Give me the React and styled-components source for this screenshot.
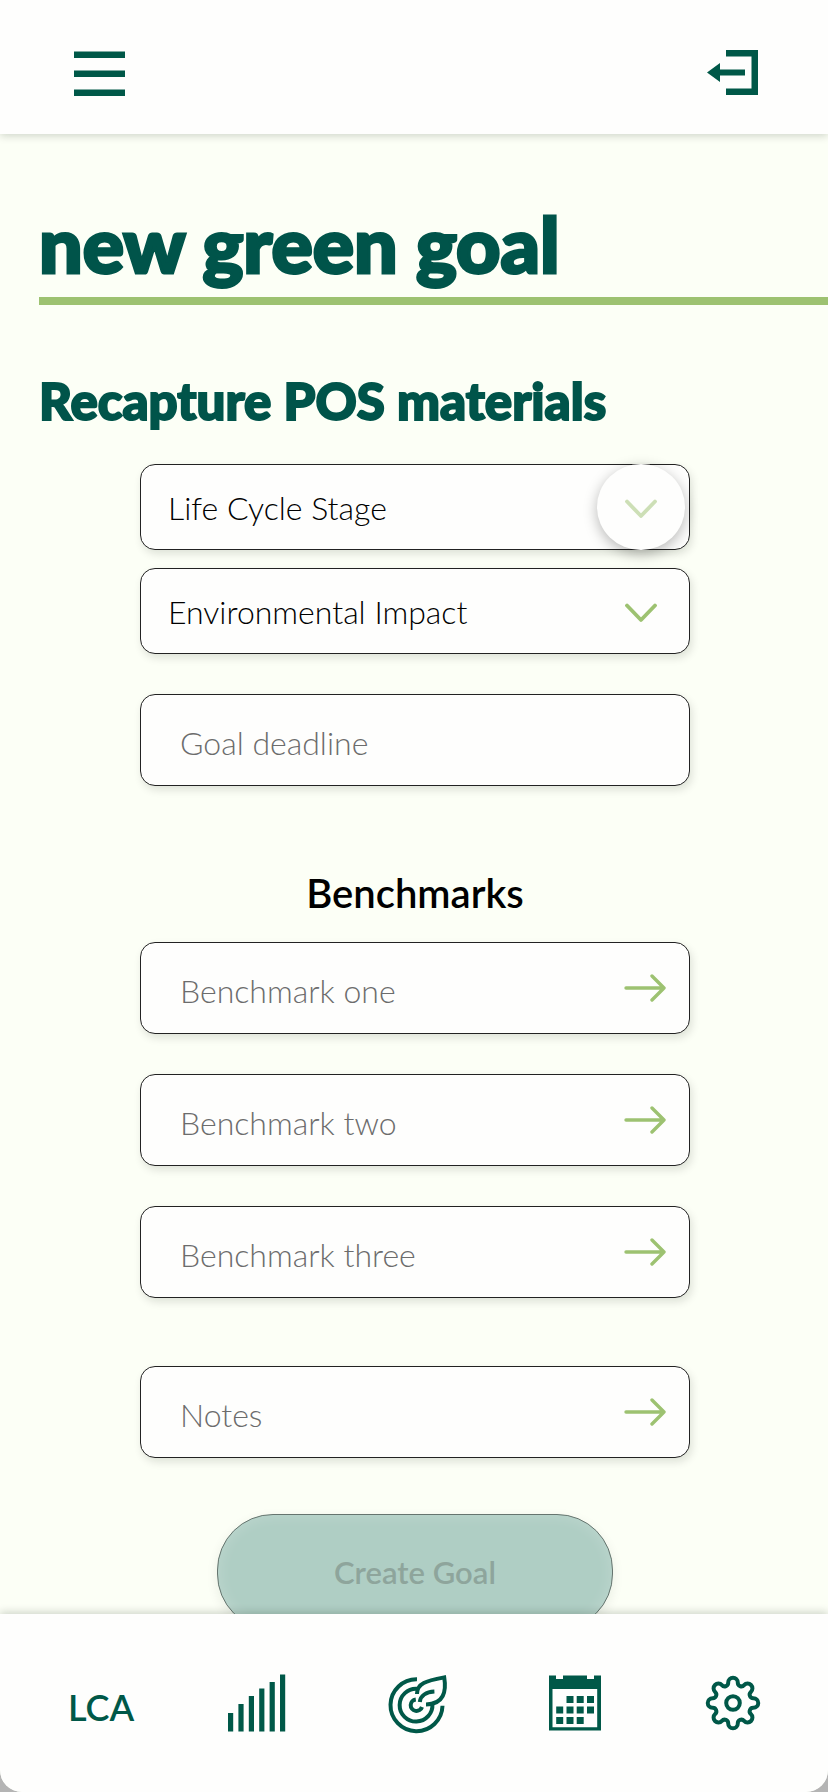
import React from "react";
import styled, { createGlobalStyle, css } from "styled-components";

const colors = {
  ink: "#005848",
  title: "#00544a",
  leaf: "#9dc271",
  page: "#fcfff6",
  surface: "#fefefd",
};

const GlobalStyle = createGlobalStyle`
  *, *::before, *::after { box-sizing: border-box; }
  body {
    margin: 0;
    background: #b4b4b4;
    font-family: Lato, "Liberation Sans", sans-serif;
  }
  h1, h2, h3 { margin: 0; }
`;

const Screen = styled.div`
  height: 100vh;
  display: flex;
  flex-direction: column;
  overflow: hidden;
  background: ${colors.page};
  border-radius: 0 0 22px 22px;
`;

const Header = styled.header`
  flex: none;
  z-index: 1;
  display: flex;
  align-items: center;
  justify-content: space-between;
  height: 134px;
  padding: 12px 70px 0 74px;
  background: ${colors.surface};
  box-shadow: 0 2px 8px rgba(0, 20, 0, 0.18);
`;

const IconButton = styled.button`
  display: flex;
  padding: 0;
  border: 0;
  background: none;
  color: ${colors.ink};
  cursor: pointer;
`;

const Content = styled.main`
  flex: 1;
  min-height: 0;
  overflow-y: auto;
  scrollbar-width: none;
  padding: 69px 0 40px;
`;

const PageTitle = styled.h1`
  margin-left: 39px;
  padding-bottom: 14px;
  border-bottom: 8px solid ${colors.leaf};
  color: ${colors.title};
  font-size: 77px;
  font-weight: 900;
  line-height: 80px;
  -webkit-text-stroke: 3px ${colors.title};
`;

const GoalName = styled.h2`
  margin: 66px 39px 33px;
  color: ${colors.title};
  font-size: 51px;
  font-weight: 900;
  line-height: 60px;
  -webkit-text-stroke: 2px ${colors.title};
`;

const GoalForm = styled.form`
  display: flex;
  flex-direction: column;
  margin: 0 138px 0 140px;
`;

const FieldGroup = styled.div`
  display: flex;
  flex-direction: column;
  gap: ${({ $gap }) => $gap}px;
  margin-bottom: ${({ $after }) => $after}px;
`;

const SectionTitle = styled.h3`
  margin-bottom: 24px;
  font-size: 40px;
  font-weight: 600;
  line-height: 50px;
  text-align: center;
`;

const Field = styled.div`
  position: relative;
`;

const controlStyles = css`
  display: block;
  width: 100%;
  margin: 0;
  border: 1px solid #222;
  border-radius: 15px;
  outline: 0;
  background: ${colors.surface};
  box-shadow: 2px 4px 8px rgba(0, 20, 10, 0.12);
  font-family: inherit;
  font-size: 32px;
  font-weight: 300;
`;

const Select = styled.select`
  ${controlStyles}
  appearance: none;
  height: 86px;
  padding: 0 100px 0 27px;
  color: #000;
`;

const TextInput = styled.input`
  ${controlStyles}
  height: 92px;
  padding: 4px 80px 0 39px;
  color: #000;

  &::placeholder {
    color: #6c6c6c;
    opacity: 1;
  }
`;

const FieldIcon = styled.span`
  position: absolute;
  top: 0;
  right: 24px;
  bottom: 0;
  display: flex;
  align-items: center;
  color: ${colors.leaf};
  pointer-events: none;
`;

const ChevronSlot = styled(FieldIcon)`
  right: 5px;
  justify-content: center;
  width: 88px;
  padding-top: 4px;
  border-radius: 50%;

  ${({ $active }) =>
    $active &&
    css`
      background: ${colors.surface};
      box-shadow: 0 4px 14px rgba(0, 0, 0, 0.28);
      svg { opacity: 0.5; }
    `}
`;

const SubmitButton = styled.button`
  align-self: center;
  width: 396px;
  max-width: 100%;
  height: 116px;
  border: 1px solid #66756f;
  border-radius: 56px;
  background: #afcec4;
  box-shadow: inset 0 0 16px rgba(255, 255, 255, 0.2), 0 4px 12px rgba(0, 40, 20, 0.08);
  color: #8ea59c;
  font-family: inherit;
  font-size: 31px;
  font-weight: 600;
`;

const TabBar = styled.nav`
  flex: none;
  z-index: 1;
  display: grid;
  grid-template-columns: repeat(5, 1fr);
  align-items: center;
  height: 178px;
  padding: 0 16px 0 22px;
  background: ${colors.surface};
  box-shadow: 0 -2px 8px rgba(0, 20, 0, 0.18);
`;

const Tab = styled.a`
  display: flex;
  align-items: center;
  justify-content: center;
  height: 58px;
  color: ${colors.ink};
  text-decoration: none;
`;

const TabText = styled.span`
  padding-top: 8px;
  font-size: 36px;
  font-weight: 600;
  line-height: 44px;
`;

const MenuIcon = () => (
  <svg width="51" height="45" viewBox="0 0 51 45" fill="currentColor" aria-hidden="true">
    <rect y="0.5" width="51" height="6.5" />
    <rect y="19.5" width="51" height="6.5" />
    <rect y="38.5" width="51" height="6.5" />
  </svg>
);

const LeaveIcon = () => (
  <svg width="52" height="46" viewBox="0 0 52 46" fill="currentColor" aria-hidden="true">
    <path d="M20 0H52V45H20V38.5H45.5V6.5H20Z" />
    <path d="M1 22.5L14 13V19.5H39V25.5H14V32Z" />
  </svg>
);

const ChevronIcon = () => (
  <svg width="32" height="20" viewBox="0 0 32 20" fill="none" stroke="currentColor" strokeWidth="3.8" strokeLinecap="round" strokeLinejoin="round" aria-hidden="true">
    <path d="M2 2.5L16 17L30 2.5" />
  </svg>
);

const ArrowIcon = () => (
  <svg width="42" height="28" viewBox="0 0 42 28" fill="none" stroke="currentColor" strokeWidth="3.4" strokeLinecap="round" strokeLinejoin="round" aria-hidden="true">
    <path d="M2 14H40M28 2L40 14L28 26" />
  </svg>
);

const BarsIcon = () => (
  <svg width="62" height="58" viewBox="0 0 62 58" fill="currentColor" aria-hidden="true">
    {[18.5, 27.5, 35.5, 43, 49.5, 57].map((h, i) => (
      <rect key={h} x={i * 10.4} y={57.5 - h} width="5.2" height={h} />
    ))}
  </svg>
);

const TargetIcon = () => (
  <svg width="66" height="68" viewBox="0 0 66 68" fill="none" stroke="currentColor" strokeWidth="4" aria-hidden="true">
    <path d="M33 10.2A26 26 0 1 0 58.5 36.8" />
    <path d="M33 19.8A16.4 16.4 0 1 0 48.4 35" />
    <path d="M31.8 30.4A5.8 5.8 0 1 0 38 38" />
    <path d="M33 25C33 14 42 12 60.2 8.4C62.5 22 60 35.3 42 35.4" />
    <path d="M35.8 33C36.5 27 42 23 50.4 22.6" />
  </svg>
);

const calendarCells = [
  [17.5, 21], [27.7, 21], [38, 21],
  [7.2, 31.5], [17.5, 31.5], [27.7, 31.5], [38, 31.5],
  [7.2, 42], [17.5, 42], [27.7, 42],
];

const CalendarIcon = () => (
  <svg width="52" height="56" viewBox="0 0 52 56" fill="currentColor" aria-hidden="true">
    <path fillRule="evenodd" d="M0 0.5H7V4H14V0.5H38V4H45V0.5H52V55.5H0ZM3.5 14V52.3H48.2V14Z" />
    {calendarCells.map(([x, y]) => (
      <rect key={`${x}-${y}`} x={x} y={y} width="7" height="7" />
    ))}
  </svg>
);

const turn = (x, y, deg) => {
  const a = (deg * Math.PI) / 180;
  return `${(x * Math.cos(a) - y * Math.sin(a)).toFixed(2)} ${(x * Math.sin(a) + y * Math.cos(a)).toFixed(2)}`;
};

const gearPath = Array.from({ length: 8 }, (_, i) => {
  const a = i * 45;
  return `${i ? "" : `M${turn(20.45, -4.8, a)}`}A4.8 4.8 0 1 1 ${turn(20.45, 4.8, a)}A3.6 3.6 0 0 0 ${turn(20.45, -4.8, a + 45)}`;
}).join("");

const GearIcon = () => (
  <svg width="56" height="56" viewBox="-28 -28 56 56" fill="none" stroke="currentColor" strokeWidth="4" aria-hidden="true">
    <path d={`${gearPath}Z`} />
    <circle r="6.8" />
  </svg>
);

const SelectField = ({ label, active }) => (
  <Field>
    <Select aria-label={label} defaultValue="">
      <option value="">{label}</option>
    </Select>
    <ChevronSlot $active={active} aria-hidden="true">
      <ChevronIcon />
    </ChevronSlot>
  </Field>
);

const TextField = ({ label, arrow }) => (
  <Field>
    <TextInput type="text" aria-label={label} placeholder={label} />
    {arrow && (
      <FieldIcon aria-hidden="true">
        <ArrowIcon />
      </FieldIcon>
    )}
  </Field>
);

export default function App() {
  return (
    <>
      <GlobalStyle />
      <Screen>
        <Header>
          <IconButton type="button" aria-label="Menu">
            <MenuIcon />
          </IconButton>
          <IconButton type="button" aria-label="Log out">
            <LeaveIcon />
          </IconButton>
        </Header>

        <Content>
          <PageTitle>new green goal</PageTitle>
          <GoalName>Recapture POS materials</GoalName>
          <GoalForm>
            <FieldGroup $gap={18} $after={40}>
              <SelectField label="Life Cycle Stage" active />
              <SelectField label="Environmental Impact" />
            </FieldGroup>
            <FieldGroup $gap={40} $after={82}>
              <TextField label="Goal deadline" />
            </FieldGroup>
            <SectionTitle>Benchmarks</SectionTitle>
            <FieldGroup $gap={40} $after={68}>
              <TextField label="Benchmark one" arrow />
              <TextField label="Benchmark two" arrow />
              <TextField label="Benchmark three" arrow />
            </FieldGroup>
            <FieldGroup $gap={40} $after={56}>
              <TextField label="Notes" arrow />
            </FieldGroup>
            <SubmitButton type="submit" disabled>
              Create Goal
            </SubmitButton>
          </GoalForm>
        </Content>

        <TabBar aria-label="Main">
          <Tab href="#lca">
            <TabText>LCA</TabText>
          </Tab>
          <Tab href="#progress" aria-label="Progress">
            <BarsIcon />
          </Tab>
          <Tab href="#goals" aria-label="Goals">
            <TargetIcon />
          </Tab>
          <Tab href="#calendar" aria-label="Calendar">
            <CalendarIcon />
          </Tab>
          <Tab href="#settings" aria-label="Settings">
            <GearIcon />
          </Tab>
        </TabBar>
      </Screen>
    </>
  );
}
